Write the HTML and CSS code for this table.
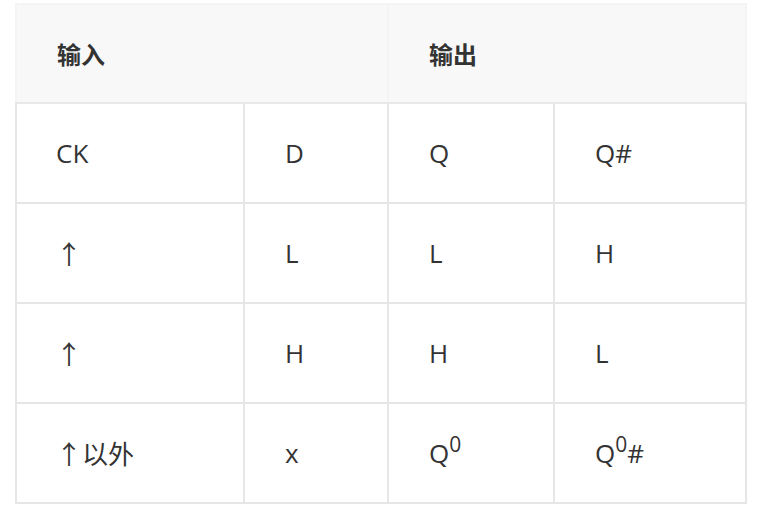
FILE: index.html
```html
<!DOCTYPE html>
<html lang="zh">
<head>
<meta charset="utf-8">
<link rel="stylesheet" href="styles.css">
</head>
<body>
<table class="truth">
  <colgroup>
    <col class="c1"><col class="c2"><col class="c3"><col class="c4">
  </colgroup>
  <thead>
    <tr><th colspan="2">输入</th><th colspan="2">输出</th></tr>
  </thead>
  <tbody>
    <tr><td>CK</td><td>D</td><td>Q</td><td>Q#</td></tr>
    <tr><td><span class="arrow">↑</span></td><td>L</td><td>L</td><td>H</td></tr>
    <tr><td><span class="arrow">↑</span></td><td>H</td><td>H</td><td>L</td></tr>
    <tr><td><span class="arrow">↑</span>以外</td><td>x</td><td>Q<sup>0</sup></td><td>Q<sup>0</sup>#</td></tr>
  </tbody>
</table>
</body>
</html>
```
FILE: styles.css
```css
html, body {
  margin: 0;
  padding: 0;
  background: #fff;
}
body {
  padding: 3px 0 0 15px;
  font-family: "Open Sans", "Noto Sans CJK SC", sans-serif;
  color: #333;
}
.truth {
  border-collapse: collapse;
  table-layout: fixed;
  width: 730px;
}
.c1 { width: 228px; }
.c2 { width: 144px; }
.c3 { width: 166px; }
.c4 { width: 192px; }
.truth th,
.truth td {
  height: 100px;
  padding: 0 0 0 40px;
  text-align: left;
  vertical-align: middle;
  font-size: 26px;
  line-height: 1;
  box-sizing: border-box;
}
.truth th {
  height: 99px;
  background: #f8f8f8;
  border: 2px solid #f4f4f4;
  border-bottom: 2px solid #e8e8e8;
  font-weight: 700;
  font-family: "Noto Sans CJK SC", sans-serif;
  font-size: 24px;
  padding-left: 40px;
}
.truth td {
  border: 2px solid #e6e6e6;
}
.truth td:first-child {
  padding-left: 39px;
}
.arrow {
  font-family: "Noto Sans CJK SC", sans-serif;
  font-size: 26px;
}
.truth td:first-child .cjk {
  font-size: 26px;
}
.truth sup {
  font-size: 21px;
  line-height: 0;
  vertical-align: 11px;
}
```
